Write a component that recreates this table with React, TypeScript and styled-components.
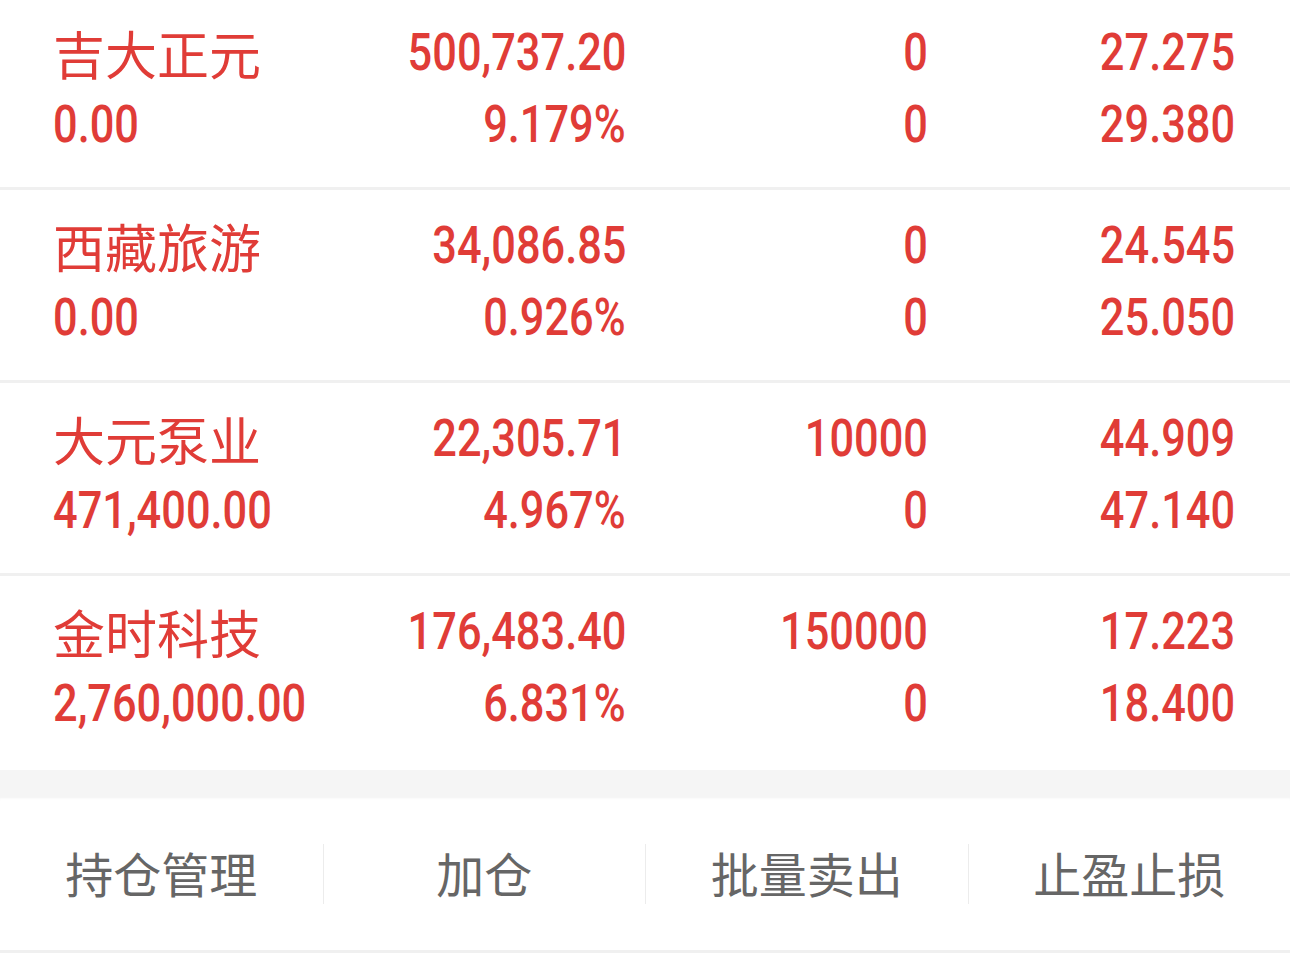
import styled, { createGlobalStyle } from "styled-components";

type Holding = {
  name: string;
  amount: string;
  value: string;
  ratio: string;
  qty: string;
  avail: string;
  cost: string;
  price: string;
};

type Align = "left" | "right";

const holdings: Holding[] = [
  { name: "吉大正元", amount: "0.00", value: "500,737.20", ratio: "9.179%", qty: "0", avail: "0", cost: "27.275", price: "29.380" },
  { name: "西藏旅游", amount: "0.00", value: "34,086.85", ratio: "0.926%", qty: "0", avail: "0", cost: "24.545", price: "25.050" },
  { name: "大元泵业", amount: "471,400.00", value: "22,305.71", ratio: "4.967%", qty: "10000", avail: "0", cost: "44.909", price: "47.140" },
  { name: "金时科技", amount: "2,760,000.00", value: "176,483.40", ratio: "6.831%", qty: "150000", avail: "0", cost: "17.223", price: "18.400" },
];

const actions = ["持仓管理", "加仓", "批量卖出", "止盈止损"];

const App = () => {
  return (
    <Page>
      <GlobalStyle />
      <List>
        {holdings.map((h) => (
          <Row key={h.name}>
            <Cell $align="left">
              <Name>{h.name}</Name>
              <Num $align="left">{h.amount}</Num>
            </Cell>
            <Cell $align="right">
              <Num $align="right">{h.value}</Num>
              <Num $align="right">{h.ratio}</Num>
            </Cell>
            <Cell $align="right">
              <Num $align="right">{h.qty}</Num>
              <Num $align="right">{h.avail}</Num>
            </Cell>
            <Cell $align="right">
              <Num $align="right">{h.cost}</Num>
              <Num $align="right">{h.price}</Num>
            </Cell>
          </Row>
        ))}
      </List>
      <Gap />
      <Toolbar>
        {actions.map((a) => (
          <Action key={a}>{a}</Action>
        ))}
      </Toolbar>
    </Page>
  );
};

const GlobalStyle = createGlobalStyle`
  body {
    margin: 0;
    background: #ffffff;
  }
`;

const Page = styled.div`
  width: 1290px;
  height: 953px;
  overflow: hidden;
  background: #ffffff;
  display: flex;
  flex-direction: column;
`;

const List = styled.div`
  display: flex;
  flex-direction: column;
`;

const Row = styled.div`
  height: 193px;
  box-sizing: border-box;
  padding: 20px 55px 0 53px;
  display: grid;
  grid-template-columns: 300px 273px 302px 307px;
  align-content: start;
  border-bottom: 3px solid #f0f0f0;

  &:first-child {
    height: 190px;
    padding-top: 17px;
  }

  &:last-child {
    height: 194px;
    border-bottom: none;
  }
`;

const Cell = styled.div<{ $align: Align }>`
  display: flex;
  flex-direction: column;
  align-items: ${({ $align }) => ($align === "left" ? "flex-start" : "flex-end")};
  color: #e03c37;
`;

const Name = styled.span`
  font-family: "Noto Sans CJK SC", "Noto Sans", sans-serif;
  font-size: 52px;
  line-height: 72px;
  white-space: nowrap;
`;

/* condensed DIN-like figures: Roboto squeezed horizontally */
const Num = styled.span<{ $align: Align }>`
  font-family: "Roboto", "Liberation Sans", sans-serif;
  font-weight: 500;
  font-size: 51px;
  line-height: 72px;
  white-space: nowrap;
  transform: scaleX(0.85);
  transform-origin: ${({ $align }) => ($align === "left" ? "left" : "right")} center;
`;

const Gap = styled.div`
  height: 27px;
  background: #f5f5f5;
`;

const Toolbar = styled.div`
  height: 153px;
  display: grid;
  grid-template-columns: repeat(4, 1fr);
  align-items: center;
  background: #ffffff;
  border-bottom: 3px solid #f0f0f0;
  box-shadow: inset 0 3px 3px -2px #f2f2f2;
`;

const Action = styled.div`
  height: 60px;
  display: flex;
  align-items: center;
  justify-content: center;
  padding-bottom: 4px;
  box-sizing: border-box;
  font-family: "Noto Sans CJK SC", "Noto Sans", sans-serif;
  font-size: 48px;
  color: #666666;
  border-left: 1px solid #ececec;

  &:first-child {
    border-left: none;
  }
`;

export default App;
